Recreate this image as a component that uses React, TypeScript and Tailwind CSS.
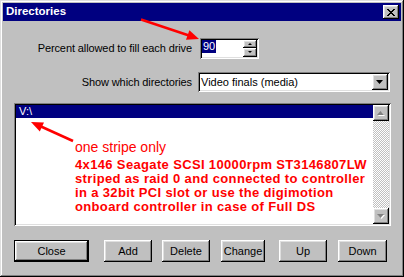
import React from "react";

const raised =
  "shadow-[inset_-1px_-1px_0_#000,inset_1px_1px_0_#fff,inset_-2px_-2px_0_#808080,inset_2px_2px_0_#dfdfdf]";
const sunken =
  "shadow-[inset_1px_1px_0_#808080,inset_-1px_-1px_0_#fff,inset_2px_2px_0_#000,inset_-2px_-2px_0_#dfdfdf]";

function Btn({ label, w, def }: { label: string; w: string; def?: boolean }) {
  return (
    <div
      className={`${w} h-[22px] flex items-center justify-center bg-[#c0c0c0] text-black text-[11px] ${
        def ? "border border-black" : ""
      }`}
    >
      <div className={`w-full h-full flex items-center justify-center ${raised}`}>{label}</div>
    </div>
  );
}

function Tri({ dir, color = "#000", w = 7, h = 4, shadow }: { dir: "up" | "down"; color?: string; w?: number; h?: number; shadow?: boolean }) {
  const pts = dir === "up" ? `0,${h} ${w},${h} ${w / 2},0` : `0,0 ${w},0 ${w / 2},${h}`;
  return (
    <svg width={w + 1} height={h + 1} viewBox={`0 0 ${w + 1} ${h + 1}`}>
      {shadow && <polygon points={pts} fill="#fff" transform="translate(1,1)" />}
      <polygon points={pts} fill={color} />
    </svg>
  );
}

export default function App() {
  return (
    <div
      className="relative w-[404px] h-[277px] bg-[#c0c0c0] p-[3px] flex flex-col shadow-[inset_-1px_-1px_0_#000,inset_1px_1px_0_#dfdfdf,inset_-2px_-2px_0_#808080,inset_2px_2px_0_#fff] overflow-hidden"
      style={{ fontFamily: '"Liberation Sans", Arial, sans-serif' }}
    >
      {/* Title bar */}
      <div className="h-[18px] bg-[#000080] flex items-center justify-between pl-[3px] pr-[2px]">
        <span className="text-white font-bold text-[11.5px] leading-none">Directories</span>
        <div className={`w-[16px] h-[14px] bg-[#c0c0c0] flex items-center justify-center ${raised}`}>
          <svg width="8" height="7" viewBox="0 0 8 7" shapeRendering="crispEdges">
            <path d="M0 0h2v1h1v1h2v-1h1v-1h2v1h-1v1h-1v1h-1v1h1v1h1v1h1v1h-2v-1h-1v-1h-2v1h-1v1h-2v-1h1v-1h1v-1h1v-1h-1v-1h-1v-1h-1z" fill="#000" />
          </svg>
        </div>
      </div>

      {/* Row 1 */}
      <div className="mt-[17px] h-[21px] flex items-center text-[11px] text-black tracking-[-0.1px]">
        <div className="w-[189px] text-right">Percent allowed to fill each drive</div>
        <div className={`ml-[8px] w-[59px] h-[21px] bg-white flex p-[2px] ${sunken}`}>
          <div className="flex-1 flex items-start">
            <span className="bg-[#000080] text-white h-[13px] leading-[13px] px-[1px] tracking-normal">90</span>
          </div>
          <div className="w-[14px] flex flex-col">
            <div className={`h-[8px] bg-[#c0c0c0] flex items-center justify-center ${raised}`}>
              <Tri dir="up" w={4} h={2} />
            </div>
            <div className={`h-[9px] bg-[#c0c0c0] flex items-center justify-center ${raised}`}>
              <Tri dir="down" w={4} h={2} />
            </div>
          </div>
        </div>
      </div>

      {/* Row 2 */}
      <div className="mt-[13px] h-[20px] flex items-center text-[11px] text-black tracking-[-0.1px]">
        <div className="w-[189px] text-right">Show which directories</div>
        <div className={`ml-[6px] w-[192px] h-[20px] bg-white flex items-center p-[2px] ${sunken}`}>
          <div className="flex-1 pl-[1px] tracking-normal">Video finals (media)</div>
          <div className={`w-[16px] h-[16px] bg-[#c0c0c0] flex items-center justify-center ${raised}`}>
            <Tri dir="down" />
          </div>
        </div>
      </div>

      {/* List box */}
      <div className={`mt-[11px] ml-[11px] w-[377px] h-[123px] bg-white p-[2px] flex ${sunken}`}>
        <div className="flex-1 flex flex-col">
          <div className="h-[13px] bg-[#000080] text-white text-[11px] leading-[13px] pl-[3px]">V:\</div>
        </div>
        <div className="w-[16px] flex flex-col">
          <div className={`h-[16px] bg-[#c0c0c0] flex items-center justify-center ${raised}`}>
            <Tri dir="up" color="#808080" shadow />
          </div>
          <div className="flex-1 bg-[image:repeating-conic-gradient(#c0c0c0_0_25%,#fff_0_50%)] bg-[length:2px_2px]" />
          <div className={`h-[16px] bg-[#c0c0c0] flex items-center justify-center ${raised}`}>
            <Tri dir="down" color="#808080" shadow />
          </div>
        </div>
      </div>

      {/* Buttons */}
      <div className="mt-[14px] ml-[11px] flex">
        <Btn label="Close" w="w-[75px]" def />
        <div className="ml-[15px]">
          <Btn label="Add" w="w-[48px]" />
        </div>
        <div className="ml-[10px]">
          <Btn label="Delete" w="w-[48px]" />
        </div>
        <div className="ml-[11px]">
          <Btn label="Change" w="w-[44px]" />
        </div>
        <div className="ml-[14px]">
          <Btn label="Up" w="w-[48px]" />
        </div>
        <div className="ml-[11px]">
          <Btn label="Down" w="w-[49px]" />
        </div>
      </div>

      {/* Red annotations overlay */}
      <svg className="absolute left-0 top-0 pointer-events-none" width="404" height="277" viewBox="0 0 404 277">
        <line x1="141" y1="19.5" x2="189" y2="35.5" stroke="#ff0000" strokeWidth="2.5" />
        <polygon points="199,39 186,39.7 189.4,30.3" fill="#ff0000" />
        <line x1="73" y1="141" x2="41" y2="126.5" stroke="#ff0000" strokeWidth="2.5" />
        <polygon points="31,122 44,122.4 39.8,131.5" fill="#ff0000" />
      </svg>
      <div className="absolute left-[75px] top-[139px] text-[14px] leading-[16px] text-[#ff0000] whitespace-nowrap">
        one stripe only
      </div>
      <div className="absolute left-[75px] top-[158px] text-[13px] leading-[14px] font-bold tracking-[0.35px] text-[#ff0000] whitespace-nowrap">
        <div>4x146 Seagate SCSI 10000rpm ST3146807LW</div>
        <div>striped as raid 0 and connected to controller</div>
        <div>in a 32bit PCI slot or use the digimotion</div>
        <div>onboard controller in case of Full DS</div>
      </div>
    </div>
  );
}
